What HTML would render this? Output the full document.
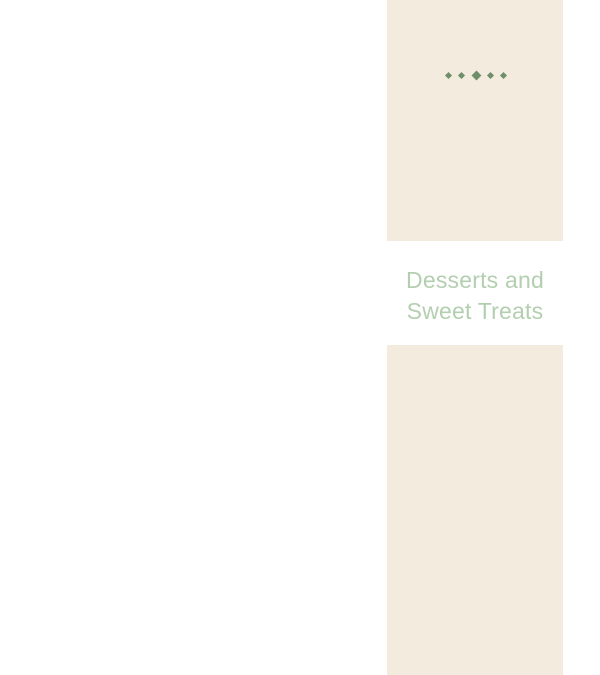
<!DOCTYPE html>
<html><head><meta charset="utf-8"><style>
html,body{margin:0;padding:0;background:#fff;width:600px;height:675px;overflow:hidden;position:relative}
.p{position:absolute;left:387px;width:176px;background:#f3ebdd}
.d{position:absolute;background:#6f8f6a;transform:rotate(45deg)}
.t{position:absolute;left:387px;width:176px;top:265px;text-align:center;font-family:"Liberation Sans",sans-serif;font-size:23px;line-height:31px;color:#b3cfb0;letter-spacing:0.2px}
</style></head><body>
<div class="p" style="top:0;height:241px"></div>
<div class="d" style="left:446px;top:73px;width:5px;height:5px"></div>
<div class="d" style="left:459px;top:73px;width:5px;height:5px"></div>
<div class="d" style="left:473px;top:72px;width:7px;height:7px"></div>
<div class="d" style="left:488px;top:73px;width:5px;height:5px"></div>
<div class="d" style="left:501px;top:73px;width:5px;height:5px"></div>
<div class="t">Desserts and<br>Sweet Treats</div>
<div class="p" style="top:345px;height:330px"></div>
</body></html>
